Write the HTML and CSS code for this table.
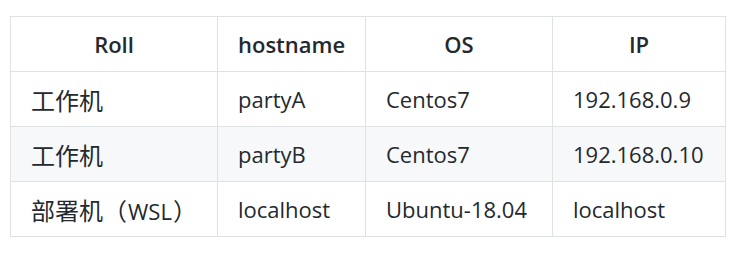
FILE: index.html
```html
<!DOCTYPE html>
<html lang="zh">
<head>
<meta charset="utf-8">
<link rel="stylesheet" href="styles.css">
</head>
<body>
<table class="hosts">
  <colgroup>
    <col class="c1"><col class="c2"><col class="c3"><col class="c4">
  </colgroup>
  <thead>
    <tr><th>Roll</th><th>hostname</th><th>OS</th><th>IP</th></tr>
  </thead>
  <tbody>
    <tr><td class="zh">工作机</td><td>partyA</td><td>Centos7</td><td>192.168.0.9</td></tr>
    <tr class="alt"><td class="zh">工作机</td><td>partyB</td><td>Centos7</td><td>192.168.0.10</td></tr>
    <tr><td class="zh">部署机（<span class="latin">WSL</span>）</td><td>localhost</td><td>Ubuntu-18.04</td><td>localhost</td></tr>
  </tbody>
</table>
</body>
</html>
```
FILE: styles.css
```css
html, body {
  margin: 0;
  background: #ffffff;
}
body {
  padding: 16px 10px;
  font-family: "Open Sans", "Noto Sans CJK SC", sans-serif;
  font-size: 22px;
  color: #24292e;
}
.hosts {
  border-collapse: collapse;
  table-layout: fixed;
  width: 716px;
}
.c1 { width: 207px; }
.c2 { width: 148px; }
.c3 { width: 187px; }
.c4 { width: 173px; }
.hosts th, .hosts td {
  border: 1px solid #dfe2e5;
  height: 55px;
  padding: 0 20px;
  box-sizing: border-box;
  white-space: nowrap;
}
.hosts th {
  font-weight: 600;
  text-align: center;
}
.hosts td {
  text-align: left;
}
.hosts td.zh {
  font-size: 24px;
}
.hosts td.zh .latin {
  font-size: 22px;
  padding: 0 1px;
}
.hosts tr.alt td {
  background: #f6f8fa;
}
```
